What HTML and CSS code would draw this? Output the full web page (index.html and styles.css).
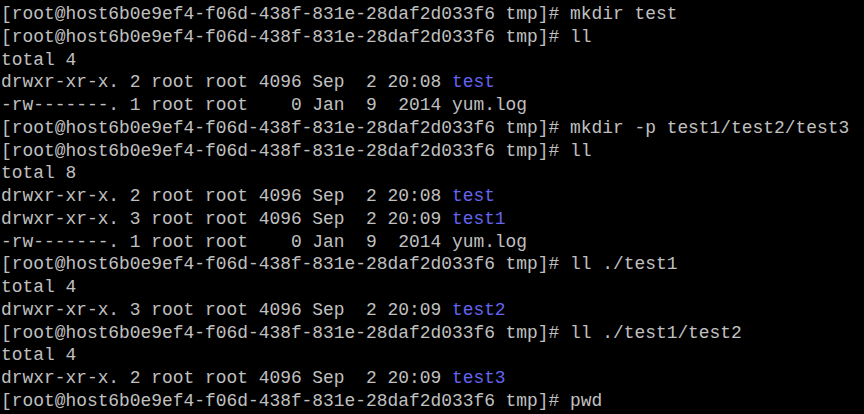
FILE: index.html
```html
<!DOCTYPE html>
<html>
<head>
<meta charset="utf-8">
<link rel="stylesheet" href="styles.css">
</head>
<body>
<pre class="term">[root@host6b0e9ef4-f06d-438f-831e-28daf2d033f6 tmp]# mkdir test
[root@host6b0e9ef4-f06d-438f-831e-28daf2d033f6 tmp]# ll
total 4
drwxr-xr-x. 2 root root 4096 Sep  2 20:08 <span class="dir">test</span>
-rw-------. 1 root root    0 Jan  9  2014 yum.log
[root@host6b0e9ef4-f06d-438f-831e-28daf2d033f6 tmp]# mkdir -p test1/test2/test3
[root@host6b0e9ef4-f06d-438f-831e-28daf2d033f6 tmp]# ll
total 8
drwxr-xr-x. 2 root root 4096 Sep  2 20:08 <span class="dir">test</span>
drwxr-xr-x. 3 root root 4096 Sep  2 20:09 <span class="dir">test1</span>
-rw-------. 1 root root    0 Jan  9  2014 yum.log
[root@host6b0e9ef4-f06d-438f-831e-28daf2d033f6 tmp]# ll ./test1
total 4
drwxr-xr-x. 3 root root 4096 Sep  2 20:09 <span class="dir">test2</span>
[root@host6b0e9ef4-f06d-438f-831e-28daf2d033f6 tmp]# ll ./test1/test2
total 4
drwxr-xr-x. 2 root root 4096 Sep  2 20:09 <span class="dir">test3</span>
[root@host6b0e9ef4-f06d-438f-831e-28daf2d033f6 tmp]# pwd</pre>
</body>
</html>
```
FILE: styles.css
```css
html, body {
  margin: 0;
  padding: 0;
  background: #000;
  height: 100%;
  overflow: hidden;
}
.term {
  margin: 0;
  padding: 3px 0 0 1px;
  font-family: "Liberation Mono", monospace;
  font-size: 17.9px;
  line-height: 22.75px;
  color: #c0c0c0;
  white-space: pre;
}
.dir {
  color: #6464f0;
}
```
